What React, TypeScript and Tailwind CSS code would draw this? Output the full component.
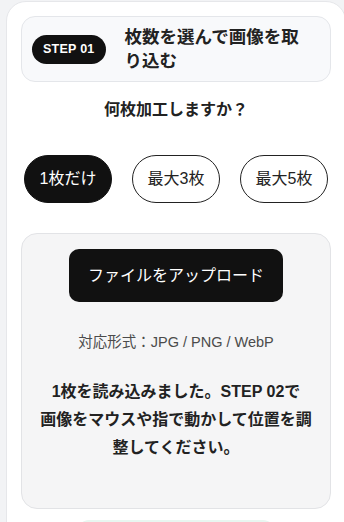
import { useState } from 'react';

const COUNTS = ['1枚だけ', '最大3枚', '最大5枚'];

export default function App() {
  const [selected, setSelected] = useState(0);

  return (
    <div
      className="min-h-[522px] w-[344px] overflow-hidden bg-[#f2f3f5] pl-[6px] pt-[1px]"
      style={{ fontFamily: '"Liberation Sans", "Noto Sans CJK JP", sans-serif' }}
    >
      <div className="w-[340px] rounded-[20px] border border-[#e6e7ea] bg-white px-[14px] pt-[14px] pb-6">
        {/* ステップ見出し */}
        <div className="flex items-center gap-[19px] rounded-[14px] border border-[#e4e6ea] bg-[#f8f9fb] pl-[10px] pr-3 py-[8px]">
          <span className="shrink-0 rounded-full bg-[#111] px-[11px] py-[6px] text-[12.5px] font-bold leading-[17px] tracking-[0.02em] text-white">
            STEP 01
          </span>
          <h2 className="max-w-[180px] text-[17.5px] font-bold leading-[24px] text-[#222]">
            枚数を選んで画像を取り込む
          </h2>
        </div>

        <p className="mt-[17px] text-center text-[16px] font-bold leading-[22px] text-[#222]">
          何枚加工しますか？
        </p>

        {/* 枚数選択 */}
        <div className="mt-[34px] flex justify-between px-[3px]">
          {COUNTS.map((label, i) => (
            <button
              key={label}
              onClick={() => setSelected(i)}
              className={
                i === selected
                  ? 'h-[48px] w-[88px] rounded-full border border-[#111] bg-[#111] text-[16px] text-white'
                  : 'h-[48px] w-[88px] rounded-full border border-[#222] bg-white text-[16px] text-[#222]'
              }
            >
              {label}
            </button>
          ))}
        </div>

        {/* アップロード */}
        <div className="mt-[30px] flex h-[276px] flex-col items-center rounded-[16px] border border-[#e2e3e6] bg-[#f5f5f6] px-3 pt-[15px]">
          <button className="h-[53px] w-[214px] rounded-[10px] bg-[#111] text-[16px] text-white">
            ファイルをアップロード
          </button>
          <p className="mt-[31px] text-[14.5px] leading-[18px] text-[#4b4b4b]">対応形式：JPG / PNG / WebP</p>
          <p className="mt-[27px] text-center text-[16px] font-bold leading-[28px] text-[#222]">
            1枚を読み込みました。STEP 02で
            <br />
            画像をマウスや指で動かして位置を調
            <br />
            整してください。
          </p>
        </div>

        <div className="mx-auto mt-[11px] h-[40px] w-[198px] rounded-[12px] bg-[#e8f6f0]" />
      </div>
    </div>
  );
}
